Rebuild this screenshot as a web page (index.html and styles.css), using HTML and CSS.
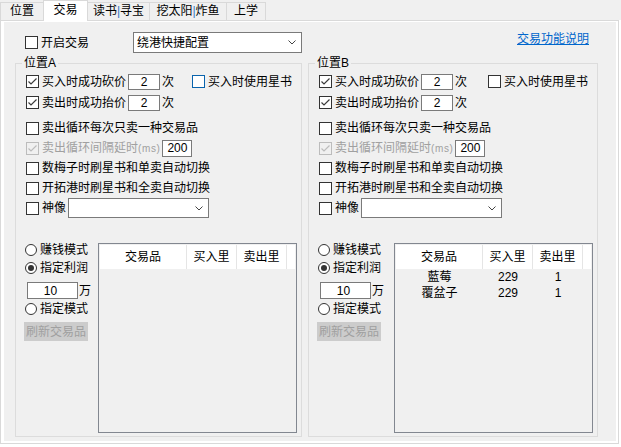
FILE: index.html
```html
<!DOCTYPE html>
<html lang="zh-CN">
<head>
<meta charset="utf-8">
<title>交易</title>
<link rel="stylesheet" href="styles.css">
</head>
<body>
<div class="tabs">
  <div class="tab t1">位置</div>
  <div class="tab t2 sel">交易</div>
  <div class="tab t3">读书<span class="bar">|</span>寻宝</div>
  <div class="tab t4">挖太阳<span class="bar">|</span>炸鱼</div>
  <div class="tab t5">上学</div>
</div>
<div class="page">
  <div class="content">
    <div class="col left">
      <div class="toprow">
        <label class="cb"><span class="box"></span><span>开启交易</span></label>
        <div class="combo main"><span>绕港快捷配置</span><svg class="chev" width="8" height="5" viewBox="0 0 8 5"><path d="M0.5 0.5 L4 4 L7.5 0.5"/></svg></div>
      </div>
      <fieldset class="group a">
        <legend>位置A</legend>
        <div class="row tall">
          <label class="cb"><span class="box"><svg viewBox="0 0 11 11"><path d="M1.5 5.5 L4 8 L9.5 2.5"/></svg></span><span>买入时成功砍价</span></label>
          <span class="num w32">2</span><span>次</span>
          <label class="cb push"><span class="box hot"></span><span>买入时使用星书</span></label>
        </div>
        <div class="row tall">
          <label class="cb"><span class="box"><svg viewBox="0 0 11 11"><path d="M1.5 5.5 L4 8 L9.5 2.5"/></svg></span><span>卖出时成功抬价</span></label>
          <span class="num w32">2</span><span>次</span>
        </div>
        <div class="row sep">
          <label class="cb"><span class="box"></span><span>卖出循环每次只卖一种交易品</span></label>
        </div>
        <div class="row">
          <label class="cb off"><span class="box"><svg viewBox="0 0 11 11"><path d="M1.5 5.5 L4 8 L9.5 2.5"/></svg></span><span>卖出循环间隔延时<span class="ms">(ms)</span></span></label>
          <span class="num w30">200</span>
        </div>
        <div class="row">
          <label class="cb"><span class="box"></span><span>数梅子时刷星书和单卖自动切换</span></label>
        </div>
        <div class="row">
          <label class="cb"><span class="box"></span><span>开拓港时刷星书和全卖自动切换</span></label>
        </div>
        <div class="row">
          <label class="cb"><span class="box"></span><span>神像</span></label>
          <div class="combo small"><span></span><svg class="chev" width="8" height="5" viewBox="0 0 8 5"><path d="M0.5 0.5 L4 4 L7.5 0.5"/></svg></div>
        </div>
        <div class="bottom">
          <div class="rcol">
            <div class="radio"><span class="dot"></span><span>赚钱模式</span></div>
            <div class="radio"><span class="dot on"></span><span>指定利润</span></div>
            <div class="numrow"><span class="num w51">10</span><span>万</span></div>
            <div class="radio r3"><span class="dot"></span><span>指定模式</span></div>
            <div class="btn">刷新交易品</div>
          </div>
          <div class="list">
            <div class="lhead"><span class="c1">交易品</span><span class="c2">买入里</span><span class="c3">卖出里</span><span class="cx"></span></div>
          </div>
        </div>
      </fieldset>
    </div>
    <div class="col right">
      <div class="toprow linkrow"><a class="link">交易功能说明</a></div>
      <fieldset class="group b">
        <legend>位置B</legend>
        <div class="row tall">
          <label class="cb"><span class="box"><svg viewBox="0 0 11 11"><path d="M1.5 5.5 L4 8 L9.5 2.5"/></svg></span><span>买入时成功砍价</span></label>
          <span class="num w32">2</span><span>次</span>
          <label class="cb push"><span class="box"></span><span>买入时使用星书</span></label>
        </div>
        <div class="row tall">
          <label class="cb"><span class="box"><svg viewBox="0 0 11 11"><path d="M1.5 5.5 L4 8 L9.5 2.5"/></svg></span><span>卖出时成功抬价</span></label>
          <span class="num w32">2</span><span>次</span>
        </div>
        <div class="row sep">
          <label class="cb"><span class="box"></span><span>卖出循环每次只卖一种交易品</span></label>
        </div>
        <div class="row">
          <label class="cb off"><span class="box"><svg viewBox="0 0 11 11"><path d="M1.5 5.5 L4 8 L9.5 2.5"/></svg></span><span>卖出循环间隔延时<span class="ms">(ms)</span></span></label>
          <span class="num w30">200</span>
        </div>
        <div class="row">
          <label class="cb"><span class="box"></span><span>数梅子时刷星书和单卖自动切换</span></label>
        </div>
        <div class="row">
          <label class="cb"><span class="box"></span><span>开拓港时刷星书和全卖自动切换</span></label>
        </div>
        <div class="row">
          <label class="cb"><span class="box"></span><span>神像</span></label>
          <div class="combo small"><span></span><svg class="chev" width="8" height="5" viewBox="0 0 8 5"><path d="M0.5 0.5 L4 4 L7.5 0.5"/></svg></div>
        </div>
        <div class="bottom">
          <div class="rcol">
            <div class="radio"><span class="dot"></span><span>赚钱模式</span></div>
            <div class="radio"><span class="dot on"></span><span>指定利润</span></div>
            <div class="numrow"><span class="num w51">10</span><span>万</span></div>
            <div class="radio r3"><span class="dot"></span><span>指定模式</span></div>
            <div class="btn">刷新交易品</div>
          </div>
          <div class="list">
            <div class="lhead"><span class="c1">交易品</span><span class="c2">买入里</span><span class="c3">卖出里</span><span class="cx"></span></div>
            <div class="lrow"><span class="c1">藍莓</span><span class="c2">229</span><span class="c3">1</span></div>
            <div class="lrow"><span class="c1">覆盆子</span><span class="c2">229</span><span class="c3">1</span></div>
          </div>
        </div>
      </fieldset>
    </div>
  </div>
</div>
</body>
</html>
```
FILE: styles.css
```css
* { box-sizing: border-box; }
html, body { margin: 0; padding: 0; }
body {
  width: 621px;
  height: 447px;
  overflow: hidden;
  background: #fff;
  color: #000;
  font-family: "Liberation Sans", "Noto Sans CJK SC", sans-serif;
  font-size: 12px;
  line-height: 14px;
}

/* tab strip */
.tabs {
  display: flex;
  align-items: flex-start;
  height: 20px;
  background: #f0f0f0;
}
.tab {
  margin-top: 2px;
  margin-right: -1px;
  height: 18px;
  border: 1px solid #d9d9d9;
  border-bottom: 0;
  background: #f0f0f0;
  text-align: center;
  line-height: 16px;
  white-space: nowrap;
}
.tab.sel {
  margin-top: 0;
  height: 21px;
  line-height: 18px;
  background: #fff;
  position: relative;
  z-index: 1;
}
.t1 { width: 44px; }
.t2 { width: 45px; }
.t3 { width: 63px; }
.t4 { width: 78px; }
.t5 { width: 40px; }
.bar { color: #3576c4; }

/* tab page */
.page {
  width: 619px;
  height: 424px;
  border: 1px solid #d9d9d9;
  background: #fff;
  padding: 1px 2px 2px 3px;
}
.content {
  height: 100%;
  background: #f0f0f0;
  display: flex;
}
.col {
  display: flex;
  flex-direction: column;
}
.col.left { width: 301px; }
.col.right { flex: 1; }

.toprow {
  margin-top: 10px;
  height: 21px;
  display: flex;
  align-items: center;
}
.col.left .toprow { padding: 0 3px 0 21px; }
.linkrow {
  justify-content: flex-end;
  align-items: flex-start;
  padding-right: 27px;
}
.link {
  color: #0066cc;
  text-decoration: underline;
  cursor: pointer;
}

/* group boxes */
.group {
  margin: 3px 3px 4px 11px;
  padding: 0 4px 3px 10px;
  border: 1px solid #dcdcdc;
  flex: 1;
  min-width: 0;
  min-inline-size: 0;
  display: flex;
  flex-direction: column;
}
.group.b { margin: 3px 18px 4px 3px; }
.group legend {
  padding: 0 2px;
  margin-left: -4px;
  line-height: 15px;
}

.row {
  display: flex;
  align-items: center;
  gap: 2px;
  height: 20px;
  white-space: nowrap;
}
.row.tall { height: 21px; }
.row.sep { margin-top: 5px; }

/* checkbox */
.cb {
  display: flex;
  align-items: center;
  gap: 3px;
}
.cb.push { margin-left: auto; margin-right: 5px; }
.box {
  width: 13px;
  height: 13px;
  border: 1px solid #333;
  background: #fff;
  display: flex;
  flex: none;
}
.box svg { width: 11px; height: 11px; }
.box path { fill: none; stroke: #3c3c3c; stroke-width: 1.2; }
.box.hot { border-color: #0a64ad; }
.cb.off { color: #a0a0a0; }
.cb.off .box { border-color: #bcbcbc; background: #f0f0f0; }
.cb.off .box path { stroke: #bcbcbc; }
.ms { font-size: 10px; letter-spacing: 0.6px; }

/* inputs */
.num {
  border: 1px solid #7a7a7a;
  background: #fff;
  height: 16px;
  display: flex;
  align-items: center;
  justify-content: center;
  flex: none;
}
.w32 { width: 32px; }
.w30 { width: 30px; height: 17px; }
.w51 { width: 51px; height: 17px; padding-right: 4px; }

.combo {
  border: 1px solid #7a7a7a;
  background: #fff;
  height: 21px;
  display: flex;
  align-items: center;
  justify-content: space-between;
  padding: 0 5px 0 3px;
  flex: none;
}
.combo.main { margin-left: auto; width: 169px; }
.combo.small { width: 141px; height: 20px; }
.chev path { fill: none; stroke: #444; stroke-width: 1; }

/* lower area */
.bottom {
  flex: 1;
  display: flex;
  margin-top: 23px;
}
.rcol {
  flex: 1;
  margin-left: -2px;
  display: flex;
  flex-direction: column;
  white-space: nowrap;
}
.radio {
  height: 18px;
  display: flex;
  align-items: center;
  gap: 3px;
  padding-left: 1px;
}
.radio.r3 { margin-top: 1px; }
.dot {
  width: 12px;
  height: 12px;
  border: 1px solid #333;
  border-radius: 50%;
  background: #fff;
  display: flex;
  align-items: center;
  justify-content: center;
  flex: none;
}
.dot.on::after {
  content: "";
  width: 6px;
  height: 6px;
  border-radius: 50%;
  background: #333;
}
.numrow {
  margin-top: 5px;
  height: 17px;
  display: flex;
  align-items: center;
  gap: 1px;
  padding-left: 3px;
}
.btn {
  margin-top: 4px;
  width: 64px;
  height: 19px;
  background: #cccccc;
  color: #a0a0a0;
  display: flex;
  align-items: center;
  justify-content: center;
}

/* list view */
.list {
  width: 199px;
  flex: none;
  margin-top: 2px;
  border: 1px solid #828790;
  padding: 1px;
  background: #f0f0f0;
}
.lhead {
  display: flex;
  height: 24px;
  background: #fff;
}
.lhead span {
  border-right: 1px solid #e5e5e5;
  display: flex;
  align-items: center;
  justify-content: center;
}
.lhead .cx { flex: 1; border-right: 0; }
.lrow {
  display: flex;
  height: 16px;
}
.lrow span {
  display: flex;
  align-items: center;
  justify-content: center;
}
.c1 { width: 87px; }
.c2 { width: 50px; }
.c3 { width: 50px; }
```
